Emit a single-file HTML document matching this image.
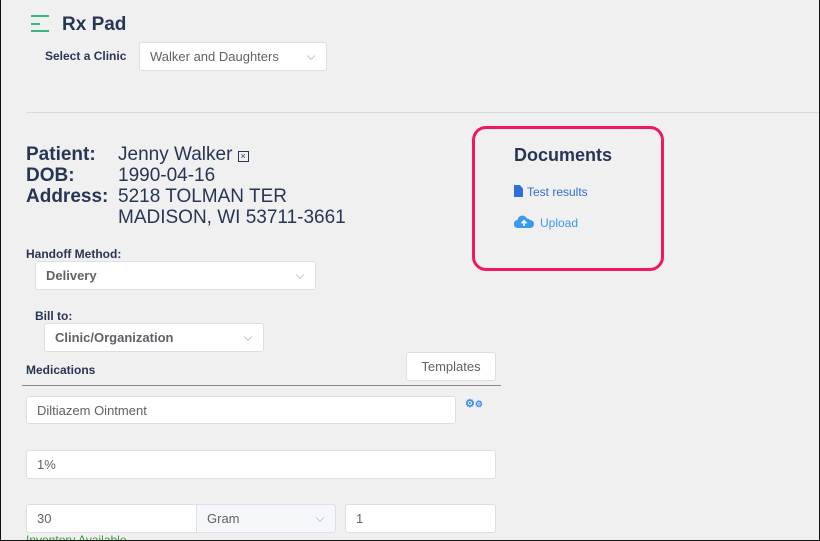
<!DOCTYPE html>
<html style="overflow:hidden;width:820px;height:541px"><head><style>
*{box-sizing:border-box;margin:0;padding:0}
body{width:820px;height:541px;background:#f0f0f0;font-family:"Liberation Sans",sans-serif;color:#283655;position:relative;overflow:hidden}
.frame{position:absolute;left:0;top:0;width:820px;height:541px;border:1px solid #111;border-top:none;pointer-events:none}
.a{position:absolute}
.box{position:absolute;background:#fff;border:1px solid #dcdfe6;border-radius:3px;font-size:13px;color:#606266;padding-left:10px;display:flex;align-items:center}
.chev{position:absolute;right:12px;top:50%;width:6px;height:6px;border-right:1px solid #c0c4cc;border-bottom:1px solid #c0c4cc;transform:translateY(-70%) rotate(45deg)}
.lbl{position:absolute;font-weight:bold;font-size:12px;color:#283655}
.big{position:absolute;font-size:19px;line-height:21px}
</style></head><body>
<div class="a" style="left:31px;top:15px;width:18px;height:2px;background:#3ab77e"></div>
<div class="a" style="left:31px;top:23px;width:9px;height:2px;background:#3ab77e"></div>
<div class="a" style="left:31px;top:30px;width:18px;height:2px;background:#3ab77e"></div>
<div class="a" style="left:62px;top:14px;font-size:19px;font-weight:bold">Rx Pad</div>
<div class="lbl" style="left:45px;top:49px">Select a Clinic</div>
<div class="box" style="left:139px;top:42px;width:188px;height:29px">Walker and Daughters<span class="chev"></span></div>
<div class="a" style="left:26px;top:112px;width:794px;height:1px;background:#d6dbe3"></div>
<div class="big" style="left:26px;top:144px;font-weight:bold">Patient:<br>DOB:<br>Address:</div>
<div class="big" style="left:118px;top:144px">Jenny Walker <span style="display:inline-block;width:11px;height:11px;border:1px solid #283655;font-size:9px;line-height:9px;text-align:center;vertical-align:1px">×</span><br>1990-04-16<br>5218 TOLMAN TER<br>MADISON, WI 53711-3661</div>
<div class="lbl" style="left:26px;top:247px">Handoff Method:</div>
<div class="box" style="left:35px;top:261px;width:281px;height:29px;font-weight:bold">Delivery<span class="chev"></span></div>
<div class="lbl" style="left:35px;top:309px">Bill to:</div>
<div class="box" style="left:44px;top:323px;width:220px;height:29px;font-weight:bold">Clinic/Organization<span class="chev"></span></div>
<div class="lbl" style="left:26px;top:363px">Medications</div>
<div class="box" style="left:406px;top:352px;width:90px;height:29px;justify-content:center;padding:0">Templates</div>
<div class="a" style="left:22px;top:385px;width:479px;height:1px;background:#888"></div>
<div class="box" style="left:26px;top:396px;width:430px;height:28px">Diltiazem Ointment</div>
<div class="a" style="left:465px;top:397px;color:#3b8de8;font-size:11px;font-weight:bold">⚙<span style="font-size:9px">⚙</span></div>
<div class="box" style="left:26px;top:450px;width:470px;height:29px">1%</div>
<div class="box" style="left:26px;top:504px;width:171px;height:29px;border-radius:3px 0 0 3px">30</div>
<div class="box" style="left:196px;top:504px;width:140px;height:29px;background:#f5f7fa;border-radius:0 3px 3px 0">Gram<span class="chev"></span></div>
<div class="box" style="left:345px;top:504px;width:151px;height:29px">1</div>
<div class="a" style="left:26px;top:533px;font-size:12px;color:#3a9a3a">Inventory Available</div>
<div class="a" style="left:472px;top:126px;width:192px;height:145px;border:3px solid #ee1866;border-radius:14px"></div>
<div class="a" style="left:514px;top:145px;font-size:18px;font-weight:bold">Documents</div>
<div class="a" style="left:514px;top:185px;width:9px;height:12px;background:#2f6fd8;clip-path:polygon(0 0,65% 0,100% 30%,100% 100%,0 100%)"></div>
<div class="a" style="left:527px;top:185px;font-size:12px;color:#2f6fd8">Test results</div>
<svg class="a" style="left:514px;top:215px" width="20" height="14" viewBox="0 0 20 14"><path d="M4 13a4 4 0 0 1-.5-8A5 5 0 0 1 13 3.5a3.6 3.6 0 0 1 3 1.5 4 4 0 0 1 0 8z" fill="#3b9af0"/><path d="M10 11V6M7.5 8.3L10 5.8l2.5 2.5" stroke="#fff" stroke-width="1.6" fill="none"/></svg>
<div class="a" style="left:540px;top:216px;font-size:12px;color:#3b9af0">Upload</div>
<div class="frame"></div>
</body></html>
